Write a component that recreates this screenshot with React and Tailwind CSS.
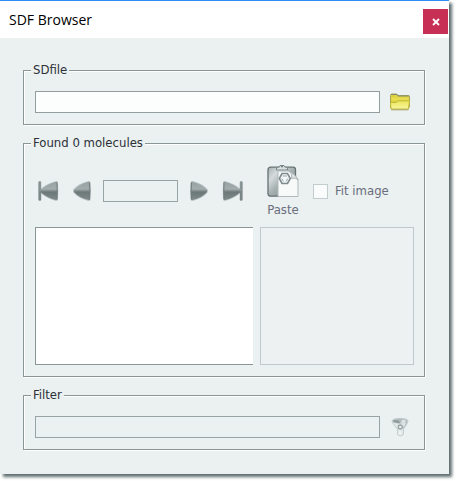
import { useState } from 'react';

const Panel = ({ title, children }) => (
  <fieldset className="min-w-0 border border-[#8a9595] pt-[13px] pr-[10px] pb-[11px] pl-[11px] shadow-[1px_1px_0_#fff,inset_1px_1px_0_#fff]">
    <legend className="-ml-1 bg-[#ebf0f0] px-0.5 leading-4">{title}</legend>
    {children}
  </fieldset>
);

// Shared gradient for the glossy grey arrows
const ArrowFill = ({ id }) => (
  <defs>
    <linearGradient id={id} x1="0" y1="0" x2="0" y2="1">
      <stop offset="0" stopColor="#96a1a1" />
      <stop offset="0.4" stopColor="#a3adad" />
      <stop offset="0.56" stopColor="#6c7777" />
      <stop offset="1" stopColor="#7f8a8a" />
    </linearGradient>
  </defs>
);

const StepIcon = ({ id, flip }) => (
  <svg width="20" height="22" viewBox="0 0 20 22" className={flip ? '-scale-x-100' : ''}>
    <ArrowFill id={id} />
    <path d="M3.500 1Q1.500.8 1.300 3Q.8 11 1.300 19Q1.500 21.200 3.500 20.900Q13.500 18.500 18.500 12.700Q19.600 11 18.500 9.300Q13.500 3.500 3.500 1Z" fill="#bcc5c5" />
    <path d="M3.500 1.800Q2.200 1.600 2.100 3Q1.500 11 2.100 19Q2.200 20.300 3.500 20Q13 17.800 17.700 12.200Q18.600 11 17.700 9.800Q13 4.200 3.500 1.800Z" fill={`url(#${id})`} />
    <path d="M2.500 2.500Q1.800 11 2.500 19.500" stroke="#717c7c" fill="none" />
  </svg>
);

const EndIcon = ({ id, flip }) => (
  <svg width="22" height="22" viewBox="0 0 22 22" className={flip ? '-scale-x-100' : ''}>
    <ArrowFill id={id} />
    <path d="M2.800 1Q1 .6 1 3Q.5 11 1 19Q1.200 21.200 3 20.900Q12.500 18.500 18.500 13V9Q12.500 3.500 2.800 1Z" fill="#bcc5c5" />
    <path d="M3 1.800Q1.800 1.600 1.800 3Q1.300 11 1.800 19Q1.900 20.300 3.200 20Q12 17.800 18.300 12.300V9.700Q12 4.200 3 1.800Z" fill={`url(#${id})`} />
    <path d="M2 2.500Q1.500 11 2 19.500" stroke="#717c7c" fill="none" />
    <rect x="17.800" y="1.200" width="2.800" height="19.500" rx="1.300" fill="#7b8686" />
    <rect x="18.300" y="2" width="1.200" height="9" fill="#929d9d" />
  </svg>
);

const FolderIcon = () => (
  <svg width="22" height="18" viewBox="0 0 22 18">
    <defs>
      <linearGradient id="folderFront" x1="0" y1="0" x2="0" y2="1">
        <stop offset="0" stopColor="#ece55a" />
        <stop offset="1" stopColor="#f9f6a0" />
      </linearGradient>
    </defs>
    <path d="M1.500 15V2.500Q1.500 1 3 1H7.500L9 2.500H19.500Q20.500 2.500 20.500 3.500V14Z" fill="#ddd23e" stroke="#a5a35a" />
    <path d="M2 1.500H8L9 3H20" fill="none" stroke="#858a78" />
    <path d="M2.500 4.500H20V7.500H2.500Z" fill="#e8dd50" />
    <path d="M1.500 9.500H7L9 7.800H20.500L19.500 16H2Z" fill="url(#folderFront)" stroke="#c2b93a" />
    <path d="M2 16.800H19.500" stroke="#a5a366" />
  </svg>
);

const PasteIcon = () => (
  <svg width="32" height="34" viewBox="0 0 32 34">
    <defs>
      <linearGradient id="board" x1="0" y1="0" x2="1" y2="1">
        <stop offset="0" stopColor="#a5afaf" />
        <stop offset="0.25" stopColor="#d5dbdb" />
        <stop offset="0.5" stopColor="#a5afaf" />
        <stop offset="1" stopColor="#7c8787" />
      </linearGradient>
    </defs>
    <rect x="1" y="3.200" width="27.500" height="29" rx="2.500" fill="url(#board)" stroke="#667171" strokeWidth="1.300" />
    <path d="M9.500 6V4Q9.500 3.200 12 3.200Q13 3 13 1.500H17Q17 3 18.500 3.200Q20.500 3.200 20.500 4V6Z" fill="#dbe1e1" stroke="#7b8686" />
    <circle cx="15" cy="2.500" r="1" fill="#6e7979" />
    <path d="M11 7H23L31 15V32.500H11Z" fill="#f8fafa" stroke="#b0baba" />
    <path d="M21.500 7Q25.500 9 24.500 14.500Q28.500 13 31 16Q28.500 10 21.500 7Z" fill="#dbe0e0" stroke="#a5afaf" strokeWidth="0.8" />
    <path d="M15 9.500H20.500L23.300 14.500L20.500 19.500H15L12.300 14.500Z" fill="#f5f8f8" stroke="#7f8a8a" strokeWidth="1.600" />
    <path d="M15.500 12H20M14.700 14.500L16.500 17.500M20.900 14.500L19.100 17.500" stroke="#98a3a3" fill="none" />
  </svg>
);

const FilterIcon = () => (
  <svg width="20" height="20" viewBox="0 0 20 20">
    <path d="M2 4.500Q2 1.500 10 1.500Q18 1.500 18 4Q17.500 7 13.500 12V17Q13 18.800 10.500 18.800Q8 18.800 7.500 17V12Q3 7.500 2 4.500Z" fill="#e1e6e6" stroke="#c5cdcd" />
    <ellipse cx="10" cy="4" rx="7.500" ry="2.400" fill="#b4bdbd" />
    <path d="M2.500 4Q4 2.500 9 3.500L10 6.200Q4 6 2.500 4Z" fill="#919c9c" />
    <path d="M12 3L16 2.800L14.500 6H11Z" fill="#dfe4e4" />
    <circle cx="10.300" cy="10" r="2" fill="#e6eaea" stroke="#98a3a3" strokeWidth="1.300" />
    <path d="M17 5Q16 7.500 13 11" stroke="#b0baba" fill="none" />
    <path d="M10 13.500V17.500" stroke="#fff" />
  </svg>
);

const NavButton = ({ label, children }) => (
  <button type="button" aria-label={label} className="flex w-[26px] justify-center">
    {children}
  </button>
);

const App = () => {
  const [file, setFile] = useState('');
  const [record, setRecord] = useState('');
  const [fitImage, setFitImage] = useState(false);

  return (
    <div className="bg-white pr-[7px] pb-[7px]">
      <div className="border-t border-[#2d8cf5] bg-[#ebf0f0] font-['DejaVu_Sans_Condensed','DejaVu_Sans',sans-serif] text-[13px] text-[#2c3038] shadow-[3px_3px_3px_#5f6e70]">
        <header className="flex h-[37px] items-center justify-between bg-white pr-px pl-[9px]">
          <h1 className="font-['Open_Sans',sans-serif] text-[14px] text-black">SDF Browser</h1>
          <button type="button" aria-label="Close" className="mt-1 flex size-[25px] items-center justify-center bg-[#c72f55]">
            <svg width="8" height="8" viewBox="0 0 8 8">
              <path d="M1 1L7 7M7 1L1 7" stroke="#fff" strokeWidth="1.800" />
            </svg>
          </button>
        </header>

        <main className="flex flex-col gap-[10px] pt-6 pr-6 pb-6 pl-[23px]">
          <Panel title="SDfile">
            <div className="flex items-center gap-1">
              <input
                type="text"
                aria-label="SDfile"
                value={file}
                onChange={(e) => setFile(e.target.value)}
                className="h-[22px] min-w-0 flex-1 border border-[#929d9d] bg-[#fcfefe] px-1"
              />
              <button type="button" aria-label="Open file" className="flex w-[30px] justify-center pl-0.5">
                <FolderIcon />
              </button>
            </div>
          </Panel>

          <Panel title="Found 0 molecules">
            <div className="flex items-center gap-2">
              <NavButton label="First">
                <EndIcon id="first" flip />
              </NavButton>
              <NavButton label="Previous">
                <StepIcon id="prev" flip />
              </NavButton>
              <input
                type="text"
                aria-label="Record"
                value={record}
                onChange={(e) => setRecord(e.target.value)}
                className="h-[22px] w-[75px] border border-[#98a3a3] px-1"
              />
              <NavButton label="Next">
                <StepIcon id="next" />
              </NavButton>
              <NavButton label="Last">
                <EndIcon id="last" />
              </NavButton>
              <button type="button" className="ml-[13px] flex w-8 flex-col items-center gap-1 leading-4 text-[#686e7c]">
                <PasteIcon />
                Paste
              </button>
              <label className="ml-1.5 flex items-center gap-[7px] whitespace-nowrap text-[#686e7c]">
                <input
                  type="checkbox"
                  checked={fitImage}
                  onChange={(e) => setFitImage(e.target.checked)}
                  className="size-[15px] appearance-none border border-[#c3cccc] bg-[#fafcfc] checked:bg-[#98a3a3]"
                />
                Fit image
              </label>
            </div>
            <div className="mt-[9px] grid h-[138px] grid-cols-[218fr_154fr] gap-[7px]">
              <div className="border border-r-0 border-[#8a9595] bg-white" />
              <div className="border border-[#c0caca] bg-[#edf1f2]" />
            </div>
          </Panel>

          <Panel title="Filter">
            <div className="flex items-center gap-1">
              <input
                type="text"
                aria-label="Filter"
                disabled
                className="h-[22px] min-w-0 flex-1 border border-[#98a3a3] px-1"
              />
              <button type="button" aria-label="Apply filter" disabled className="flex w-[30px] justify-center pl-0.5">
                <FilterIcon />
              </button>
            </div>
          </Panel>
        </main>
      </div>
    </div>
  );
};

export default App;
